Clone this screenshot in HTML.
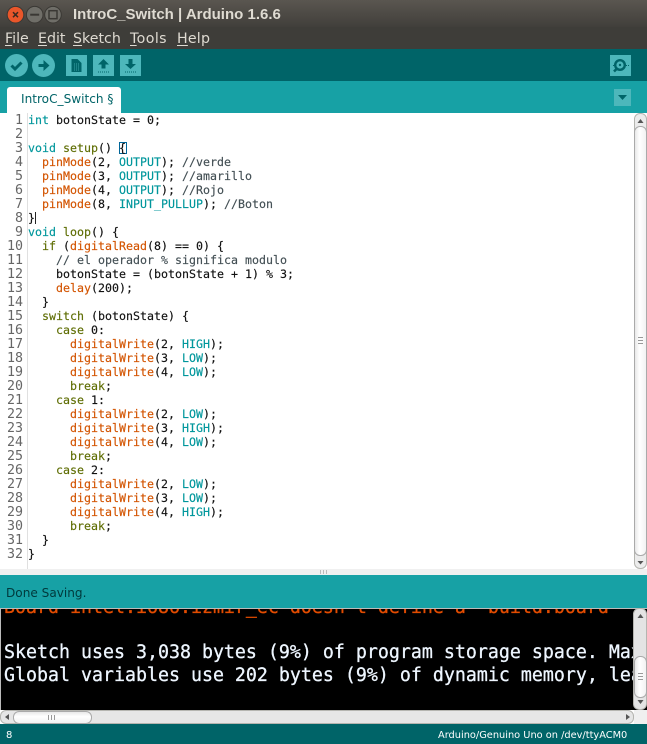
<!DOCTYPE html>
<html><head><meta charset="utf-8">
<style>
html,body{margin:0;padding:0;background:#fff}
#p{position:relative;width:647px;height:744px;overflow:hidden;font-family:"DejaVu Sans",sans-serif}
.a{position:absolute}
pre{margin:0;font-family:"DejaVu Sans Mono",monospace}
#code{left:28px;top:113px;font-size:11.63px;line-height:14px;color:#111;-webkit-text-stroke:.15px currentColor}
#nums{left:0;top:114px;width:23px;text-align:right;font-size:13.3px;line-height:14px;color:#666}
.k{color:#00979c}.f{color:#d35400}.s{color:#5e6d03}.c{color:#434f54}
#con{left:4px;font-size:18.27px;line-height:22.5px;color:#eef6ff;-webkit-text-stroke:.3px currentColor}
u{text-decoration:underline;text-underline-offset:2px;text-decoration-thickness:1px}
.m{position:absolute;top:29px;font-size:14.200px;color:#dfdbd2;line-height:20px;white-space:nowrap}
</style></head><body><div id="p">
<div class="a" style="left:0;top:0;width:647px;height:27px;background:linear-gradient(#5a5650,#413f3b)"></div>
<div class="a" style="left:0;top:27px;width:647px;height:22px;background:#3e3d39"></div>
<svg class="a" style="left:0;top:0" width="70" height="28">
<circle cx="15.500" cy="14.700" r="8.300" fill="#e9562a" stroke="#3a3834"/>
<path d="M13 12.200l5 5M18 12.200l-5 5" stroke="#3a2a20" stroke-width="1.500"/>
<circle cx="34.700" cy="14.700" r="8.300" fill="#6f6e68" stroke="#3a3834"/>
<path d="M30.200 14.700h9" stroke="#3a3834" stroke-width="2"/>
<circle cx="53" cy="14.700" r="8.300" fill="#6f6e68" stroke="#3a3834"/>
<rect x="49" y="10.700" width="8" height="8" fill="none" stroke="#3a3834" stroke-width="1.500"/>
</svg>
<div class="a" style="left:73px;top:7px;font-weight:bold;color:#dfdbd2;line-height:16px;white-space:nowrap;font-family:'Liberation Sans',sans-serif;font-size:15px">IntroC_Switch | Arduino 1.6.6</div>
<div class="m" style="left:5px"><u>F</u>ile</div>
<div class="m" style="left:38px"><u>E</u>dit</div>
<div class="m" style="left:73px"><u>S</u>ketch</div>
<div class="m" style="left:130px;letter-spacing:.4px"><u>T</u>ools</div>
<div class="m" style="left:177px;letter-spacing:.2px"><u>H</u>elp</div>

<div class="a" style="left:0;top:49px;width:647px;height:32px;background:#006468"></div>
<svg class="a" style="left:0;top:49px" width="150" height="32">
<circle cx="16.500" cy="16.500" r="11.500" fill="#4db7bb"/>
<path d="M11.500 16.500l3.500 3.500 6.500-6.500" fill="none" stroke="#006468" stroke-width="3"/>
<circle cx="43.500" cy="16.500" r="11.500" fill="#4db7bb"/>
<path d="M38.500 15h5v-4l6 5.500-6 5.500v-4h-5z" fill="#006468"/>
<rect x="66" y="6" width="21" height="21" fill="#4db7bb"/>
<path d="M71.500 10h6l4 4v9h-10z" fill="#006468"/>
<path d="M74 15h6M74 17h6M74 19h6M74 21h6" stroke="#4db7bb" stroke-width=".7" stroke-dasharray="1 1"/>
<rect x="93" y="6" width="21" height="21" fill="#4db7bb"/>
<path d="M103.500 10l5.500 5.500h-3.500v4h-4v-4H98z" fill="#006468"/>
<path d="M98 23h11" stroke="#006468" stroke-dasharray="1 1"/>
<rect x="120" y="6" width="21" height="21" fill="#4db7bb"/>
<path d="M128.500 10h4v5h3.500l-5.500 5-5.500-5h3.500z" fill="#006468"/>
<path d="M125 23h11" stroke="#006468" stroke-dasharray="1 1"/>
</svg>
<svg class="a" style="left:610px;top:55px" width="21" height="21">
<rect width="21" height="21" fill="#4db7bb"/>
<circle cx="10" cy="10" r="4.800" fill="none" stroke="#006468" stroke-width="2.400"/>
<circle cx="10" cy="10" r="1.200" fill="#006468"/>
<path d="M7 13.500l-3 3" stroke="#006468" stroke-width="2.600"/>
<path d="M3 10.500h1M16 10.500h4" stroke="#006468" stroke-dasharray="1 1"/>
</svg>

<div class="a" style="left:0;top:81px;width:647px;height:32px;background:#17a1a5"></div>
<div class="a" style="left:7px;top:87px;width:114px;height:26px;background:#fff;border-radius:3px 3px 0 0"></div>
<div class="a" style="left:21px;top:91px;font-size:12.100px;line-height:16px;color:#006468;white-space:nowrap">IntroC_Switch §</div>
<svg class="a" style="left:614px;top:89px" width="17" height="17">
<rect width="17" height="17" fill="#4db7bb"/>
<path d="M4 6h9l-4.500 5z" fill="#006468"/>
</svg>

<div class="a" style="left:0;top:113px;width:647px;height:456px;background:#fff"></div>
<div class="a" style="left:27px;top:113px;width:1px;height:456px;background:#e0e0e0"></div>
<pre class="a" id="nums">1
2
3
4
5
6
7
8
9
10
11
12
13
14
15
16
17
18
19
20
21
22
23
24
25
26
27
28
29
30
31
32</pre>
<div class="a" style="left:119px;top:142px;width:8px;height:12px;box-sizing:border-box;border:1px solid #006699"></div>
<div class="a" style="left:35px;top:212px;width:1px;height:12px;background:#222"></div>
<pre class="a" id="code"><span class="k">int</span> botonState = 0;

<span class="k">void</span> <span class="s">setup</span>() {
  <span class="f">pinMode</span>(2, <span class="k">OUTPUT</span>); <span class="c">//verde</span>
  <span class="f">pinMode</span>(3, <span class="k">OUTPUT</span>); <span class="c">//amarillo</span>
  <span class="f">pinMode</span>(4, <span class="k">OUTPUT</span>); <span class="c">//Rojo</span>
  <span class="f">pinMode</span>(8, <span class="k">INPUT_PULLUP</span>); <span class="c">//Boton</span>
}
<span class="k">void</span> <span class="s">loop</span>() {
  <span class="s">if</span> (<span class="f">digitalRead</span>(8) == 0) {
    <span class="c">// el operador % significa modulo</span>
    botonState = (botonState + 1) % 3;
    <span class="f">delay</span>(200);
  }
  <span class="s">switch</span> (botonState) {
    <span class="s">case</span> 0:
      <span class="f">digitalWrite</span>(2, <span class="k">HIGH</span>);
      <span class="f">digitalWrite</span>(3, <span class="k">LOW</span>);
      <span class="f">digitalWrite</span>(4, <span class="k">LOW</span>);
      <span class="s">break</span>;
    <span class="s">case</span> 1:
      <span class="f">digitalWrite</span>(2, <span class="k">LOW</span>);
      <span class="f">digitalWrite</span>(3, <span class="k">HIGH</span>);
      <span class="f">digitalWrite</span>(4, <span class="k">LOW</span>);
      <span class="s">break</span>;
    <span class="s">case</span> 2:
      <span class="f">digitalWrite</span>(2, <span class="k">LOW</span>);
      <span class="f">digitalWrite</span>(3, <span class="k">LOW</span>);
      <span class="f">digitalWrite</span>(4, <span class="k">HIGH</span>);
      <span class="s">break</span>;
  }
}</pre>
<div class="a" style="left:634px;top:113px;width:13px;height:456px;background:#fff"></div>
<div class="a" style="left:634px;top:113px;width:13px;height:456px;box-sizing:border-box;border:1px solid #b5b5b0;border-radius:6px;background:#ececec"></div>
<div class="a" style="left:634px;top:126px;width:13px;height:430px;box-sizing:border-box;border:1px solid #aaa;border-radius:6px;background:linear-gradient(90deg,#e8e8e8,#fff 40%,#f2f2f2)"></div>
<div class="a" style="left:638px;top:337px;width:5px;height:8px;background:repeating-linear-gradient(#999 0 1px,transparent 1px 3px)"></div>
<svg class="a" style="left:634px;top:113px" width="13" height="456"><path d="M3.500 10h6l-3-4z" fill="#555"/><path d="M3.500 448h6l-3 3.500z" fill="#555"/></svg>

<div class="a" style="left:0;top:569px;width:647px;height:6px;background:#f0f0f0"></div>
<div class="a" style="left:320px;top:570px;width:7px;height:4px;background:repeating-linear-gradient(90deg,#bbb 0 1px,transparent 1px 3px)"></div>
<div class="a" style="left:0;top:575px;width:647px;height:33px;background:#17a1a5"></div>
<div class="a" style="left:6px;top:585px;font-size:12.100px;line-height:16px;color:#00393c;white-space:nowrap">Done Saving.</div>

<div class="a" style="left:0;top:608px;width:647px;height:102px;background:#000;overflow:hidden;border-top:1px solid #bbb;box-sizing:border-box">
<pre class="a" id="con" style="top:-12px"><span style="color:#e34c00">Board intel:i686:izmir_ec doesn't define a 'build.board'</span>

Sketch uses 3,038 bytes (9%) of program storage space. Maximum is 32,256 bytes.
Global variables use 202 bytes (9%) of dynamic memory, leaving 1,846 bytes.</pre>
</div>
<div class="a" style="left:0;top:608px;width:1px;height:102px;background:#bbb"></div>
<div class="a" style="left:633px;top:608px;width:14px;height:102px;box-sizing:border-box;border:1px solid #b5b5b0;border-radius:6px;background:#e4e4e4"></div>
<div class="a" style="left:634px;top:656px;width:13px;height:42px;box-sizing:border-box;border:1px solid #aaa;border-radius:6px;background:linear-gradient(90deg,#e8e8e8,#fff 40%,#f2f2f2)"></div>
<div class="a" style="left:638px;top:673px;width:5px;height:8px;background:repeating-linear-gradient(#999 0 1px,transparent 1px 3px)"></div>
<svg class="a" style="left:634px;top:608px" width="13" height="102"><path d="M3.500 10h6l-3-4z" fill="#555"/><path d="M3.500 92h6l-3 4z" fill="#555"/></svg>

<div class="a" style="left:0;top:710px;width:634px;height:14px;box-sizing:border-box;border:1px solid #b5b5b0;border-radius:6px;background:#e6e6e6"></div>
<div class="a" style="left:13px;top:711px;width:79px;height:13px;box-sizing:border-box;border:1px solid #aaa;border-radius:6px;background:linear-gradient(#e8e8e8,#fff 40%,#f2f2f2)"></div>
<div class="a" style="left:48px;top:715px;width:8px;height:5px;background:repeating-linear-gradient(90deg,#999 0 1px,transparent 1px 3px)"></div>
<svg class="a" style="left:0;top:710px" width="634" height="14"><path d="M9 4v6l-4-3z" fill="#555"/><path d="M626 4v6l4-3z" fill="#555"/></svg>
<div class="a" style="left:634px;top:710px;width:13px;height:14px;background:#f0f0f0"></div>

<div class="a" style="left:0;top:724px;width:647px;height:20px;background:#006468"></div>
<div class="a" style="left:6px;top:729px;font-size:10px;line-height:14px;color:#fff">8</div>
<div class="a" style="left:438px;top:729px;font-size:9.800px;line-height:14px;color:#fff;white-space:nowrap">Arduino/Genuino Uno on /dev/ttyACM0</div>
</div></body></html>
